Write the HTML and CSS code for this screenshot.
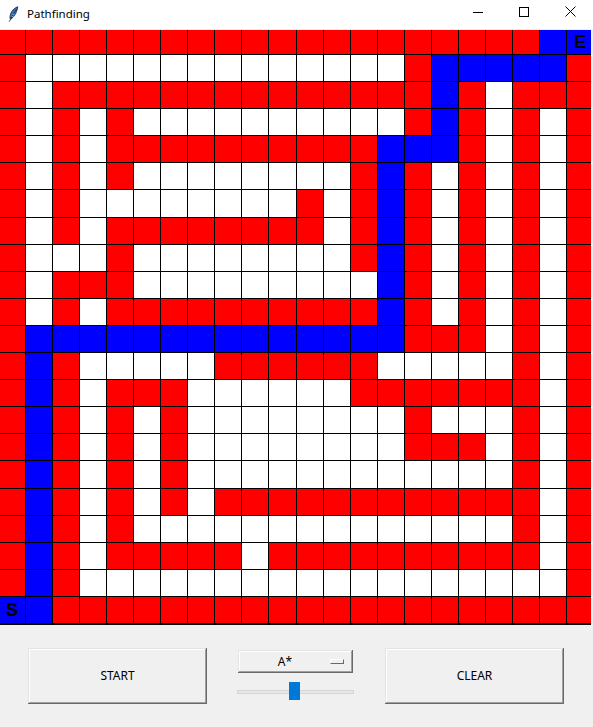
FILE: index.html
```html
<!DOCTYPE html>
<html>
<head>
<meta charset="utf-8">
<title>Pathfinding</title>
<link rel="stylesheet" href="styles.css">
</head>
<body>
<div class="window">
  <header class="titlebar">
    <svg class="app-icon" width="11" height="16" viewBox="0 0 11 16">
      <path d="M9.8 0.8 C6.5 1.8 3.2 5 2.2 9.5 C1.8 11.2 2 12.6 2.6 13.2 C5.6 11.5 8.6 7.5 9.8 0.8 Z" fill="#3a78c9" stroke="#1b2a44" stroke-width="0.9"/>
      <path d="M8.6 3 C6.4 6 4.3 9.6 2.6 13.2 L1.2 15.6" fill="none" stroke="#1b2a44" stroke-width="0.9"/>
      <path d="M4.2 8.6 L6.4 8.4 M3.6 10.6 L5.6 10.3" stroke="#a8c6ee" stroke-width="0.7"/>
    </svg>
    <span class="title">Pathfinding</span>
    <div class="win-controls">
      <span class="win-btn"><svg width="10" height="10" viewBox="0 0 10 10"><path d="M0 5.5 H10" stroke="#000" stroke-width="1"/></svg></span>
      <span class="win-btn"><svg width="10" height="10" viewBox="0 0 10 10"><rect x="0.5" y="0.5" width="9" height="9" fill="none" stroke="#000" stroke-width="1"/></svg></span>
      <span class="win-btn"><svg width="11" height="11" viewBox="0 0 11 11"><path d="M0.5 0.5 L10.5 10.5 M10.5 0.5 L0.5 10.5" stroke="#000" stroke-width="1"/></svg></span>
    </div>
  </header>

  <main class="canvas">
    <div class="board">
      <!-- row 0 -->
      <i class="r"></i><i class="r"></i><i class="r"></i><i class="r"></i><i class="r"></i><i class="r"></i><i class="r"></i><i class="r"></i><i class="r"></i><i class="r"></i><i class="r"></i><i class="r"></i><i class="r"></i><i class="r"></i><i class="r"></i><i class="r"></i><i class="r"></i><i class="r"></i><i class="r"></i><i class="r"></i><i class="b"></i><i class="b label">E</i>
      <!-- row 1 -->
      <i class="r"></i><i class="w"></i><i class="w"></i><i class="w"></i><i class="w"></i><i class="w"></i><i class="w"></i><i class="w"></i><i class="w"></i><i class="w"></i><i class="w"></i><i class="w"></i><i class="w"></i><i class="w"></i><i class="w"></i><i class="r"></i><i class="b"></i><i class="b"></i><i class="b"></i><i class="b"></i><i class="b"></i><i class="r"></i>
      <!-- row 2 -->
      <i class="r"></i><i class="w"></i><i class="r"></i><i class="r"></i><i class="r"></i><i class="r"></i><i class="r"></i><i class="r"></i><i class="r"></i><i class="r"></i><i class="r"></i><i class="r"></i><i class="r"></i><i class="r"></i><i class="r"></i><i class="r"></i><i class="b"></i><i class="r"></i><i class="w"></i><i class="r"></i><i class="r"></i><i class="r"></i>
      <!-- row 3 -->
      <i class="r"></i><i class="w"></i><i class="r"></i><i class="w"></i><i class="r"></i><i class="w"></i><i class="w"></i><i class="w"></i><i class="w"></i><i class="w"></i><i class="w"></i><i class="w"></i><i class="w"></i><i class="w"></i><i class="w"></i><i class="r"></i><i class="b"></i><i class="r"></i><i class="w"></i><i class="r"></i><i class="w"></i><i class="r"></i>
      <!-- row 4 -->
      <i class="r"></i><i class="w"></i><i class="r"></i><i class="w"></i><i class="r"></i><i class="r"></i><i class="r"></i><i class="r"></i><i class="r"></i><i class="r"></i><i class="r"></i><i class="r"></i><i class="r"></i><i class="r"></i><i class="b"></i><i class="b"></i><i class="b"></i><i class="r"></i><i class="w"></i><i class="r"></i><i class="w"></i><i class="r"></i>
      <!-- row 5 -->
      <i class="r"></i><i class="w"></i><i class="r"></i><i class="w"></i><i class="r"></i><i class="w"></i><i class="w"></i><i class="w"></i><i class="w"></i><i class="w"></i><i class="w"></i><i class="w"></i><i class="w"></i><i class="r"></i><i class="b"></i><i class="r"></i><i class="w"></i><i class="r"></i><i class="w"></i><i class="r"></i><i class="w"></i><i class="r"></i>
      <!-- row 6 -->
      <i class="r"></i><i class="w"></i><i class="r"></i><i class="w"></i><i class="w"></i><i class="w"></i><i class="w"></i><i class="w"></i><i class="w"></i><i class="w"></i><i class="w"></i><i class="r"></i><i class="w"></i><i class="r"></i><i class="b"></i><i class="r"></i><i class="w"></i><i class="r"></i><i class="w"></i><i class="r"></i><i class="w"></i><i class="r"></i>
      <!-- row 7 -->
      <i class="r"></i><i class="w"></i><i class="r"></i><i class="w"></i><i class="r"></i><i class="r"></i><i class="r"></i><i class="r"></i><i class="r"></i><i class="r"></i><i class="r"></i><i class="r"></i><i class="w"></i><i class="r"></i><i class="b"></i><i class="r"></i><i class="w"></i><i class="r"></i><i class="w"></i><i class="r"></i><i class="w"></i><i class="r"></i>
      <!-- row 8 -->
      <i class="r"></i><i class="w"></i><i class="w"></i><i class="w"></i><i class="r"></i><i class="w"></i><i class="w"></i><i class="w"></i><i class="w"></i><i class="w"></i><i class="w"></i><i class="w"></i><i class="w"></i><i class="r"></i><i class="b"></i><i class="r"></i><i class="w"></i><i class="r"></i><i class="w"></i><i class="r"></i><i class="w"></i><i class="r"></i>
      <!-- row 9 -->
      <i class="r"></i><i class="w"></i><i class="r"></i><i class="r"></i><i class="r"></i><i class="w"></i><i class="w"></i><i class="w"></i><i class="w"></i><i class="w"></i><i class="w"></i><i class="w"></i><i class="w"></i><i class="w"></i><i class="b"></i><i class="r"></i><i class="w"></i><i class="r"></i><i class="w"></i><i class="r"></i><i class="w"></i><i class="r"></i>
      <!-- row 10 -->
      <i class="r"></i><i class="w"></i><i class="r"></i><i class="w"></i><i class="r"></i><i class="r"></i><i class="r"></i><i class="r"></i><i class="r"></i><i class="r"></i><i class="r"></i><i class="r"></i><i class="r"></i><i class="r"></i><i class="b"></i><i class="r"></i><i class="w"></i><i class="r"></i><i class="w"></i><i class="r"></i><i class="w"></i><i class="r"></i>
      <!-- row 11 -->
      <i class="r"></i><i class="b"></i><i class="b"></i><i class="b"></i><i class="b"></i><i class="b"></i><i class="b"></i><i class="b"></i><i class="b"></i><i class="b"></i><i class="b"></i><i class="b"></i><i class="b"></i><i class="b"></i><i class="b"></i><i class="r"></i><i class="r"></i><i class="r"></i><i class="w"></i><i class="r"></i><i class="w"></i><i class="r"></i>
      <!-- row 12 -->
      <i class="r"></i><i class="b"></i><i class="r"></i><i class="w"></i><i class="w"></i><i class="w"></i><i class="w"></i><i class="w"></i><i class="r"></i><i class="r"></i><i class="r"></i><i class="r"></i><i class="r"></i><i class="r"></i><i class="w"></i><i class="w"></i><i class="w"></i><i class="w"></i><i class="w"></i><i class="r"></i><i class="w"></i><i class="r"></i>
      <!-- row 13 -->
      <i class="r"></i><i class="b"></i><i class="r"></i><i class="w"></i><i class="r"></i><i class="r"></i><i class="r"></i><i class="w"></i><i class="w"></i><i class="w"></i><i class="w"></i><i class="w"></i><i class="w"></i><i class="r"></i><i class="r"></i><i class="r"></i><i class="r"></i><i class="r"></i><i class="r"></i><i class="r"></i><i class="w"></i><i class="r"></i>
      <!-- row 14 -->
      <i class="r"></i><i class="b"></i><i class="r"></i><i class="w"></i><i class="r"></i><i class="w"></i><i class="r"></i><i class="w"></i><i class="w"></i><i class="w"></i><i class="w"></i><i class="w"></i><i class="w"></i><i class="w"></i><i class="w"></i><i class="r"></i><i class="w"></i><i class="w"></i><i class="w"></i><i class="r"></i><i class="w"></i><i class="r"></i>
      <!-- row 15 -->
      <i class="r"></i><i class="b"></i><i class="r"></i><i class="w"></i><i class="r"></i><i class="w"></i><i class="r"></i><i class="w"></i><i class="w"></i><i class="w"></i><i class="w"></i><i class="w"></i><i class="w"></i><i class="w"></i><i class="w"></i><i class="r"></i><i class="r"></i><i class="r"></i><i class="w"></i><i class="r"></i><i class="w"></i><i class="r"></i>
      <!-- row 16 -->
      <i class="r"></i><i class="b"></i><i class="r"></i><i class="w"></i><i class="r"></i><i class="w"></i><i class="r"></i><i class="w"></i><i class="w"></i><i class="w"></i><i class="w"></i><i class="w"></i><i class="w"></i><i class="w"></i><i class="w"></i><i class="w"></i><i class="w"></i><i class="w"></i><i class="w"></i><i class="r"></i><i class="w"></i><i class="r"></i>
      <!-- row 17 -->
      <i class="r"></i><i class="b"></i><i class="r"></i><i class="w"></i><i class="r"></i><i class="w"></i><i class="r"></i><i class="w"></i><i class="r"></i><i class="r"></i><i class="r"></i><i class="r"></i><i class="r"></i><i class="r"></i><i class="r"></i><i class="r"></i><i class="r"></i><i class="r"></i><i class="r"></i><i class="r"></i><i class="w"></i><i class="r"></i>
      <!-- row 18 -->
      <i class="r"></i><i class="b"></i><i class="r"></i><i class="w"></i><i class="r"></i><i class="w"></i><i class="w"></i><i class="w"></i><i class="w"></i><i class="w"></i><i class="w"></i><i class="w"></i><i class="w"></i><i class="w"></i><i class="w"></i><i class="w"></i><i class="w"></i><i class="w"></i><i class="w"></i><i class="r"></i><i class="w"></i><i class="r"></i>
      <!-- row 19 -->
      <i class="r"></i><i class="b"></i><i class="r"></i><i class="w"></i><i class="r"></i><i class="r"></i><i class="r"></i><i class="r"></i><i class="r"></i><i class="w"></i><i class="r"></i><i class="r"></i><i class="r"></i><i class="r"></i><i class="r"></i><i class="r"></i><i class="r"></i><i class="r"></i><i class="r"></i><i class="r"></i><i class="w"></i><i class="r"></i>
      <!-- row 20 -->
      <i class="r"></i><i class="b"></i><i class="r"></i><i class="w"></i><i class="w"></i><i class="w"></i><i class="w"></i><i class="w"></i><i class="w"></i><i class="w"></i><i class="w"></i><i class="w"></i><i class="w"></i><i class="w"></i><i class="w"></i><i class="w"></i><i class="w"></i><i class="w"></i><i class="w"></i><i class="w"></i><i class="w"></i><i class="r"></i>
      <!-- row 21 -->
      <i class="b label">S</i><i class="b"></i><i class="r"></i><i class="r"></i><i class="r"></i><i class="r"></i><i class="r"></i><i class="r"></i><i class="r"></i><i class="r"></i><i class="r"></i><i class="r"></i><i class="r"></i><i class="r"></i><i class="r"></i><i class="r"></i><i class="r"></i><i class="r"></i><i class="r"></i><i class="r"></i><i class="r"></i><i class="r"></i>
    </div>
  </main>

  <footer class="controls">
    <button class="btn">START</button>
    <div class="middle">
      <div class="option-menu">
        <span class="option-text">A*</span>
        <span class="option-indicator"></span>
      </div>
      <div class="slider">
        <div class="slider-track"></div>
        <div class="slider-thumb"></div>
      </div>
    </div>
    <button class="btn">CLEAR</button>
  </footer>
</div>
</body>
</html>
```

FILE: styles.css
```css
html, body {
  margin: 0;
  padding: 0;
}

body {
  width: 593px;
  height: 727px;
  overflow: hidden;
  background: #f0f0f0;
  font-family: "Noto Sans", "Open Sans", sans-serif;
  color: #000;
}

.window {
  display: flex;
  flex-direction: column;
  width: 593px;
  height: 727px;
}

/* Title bar */
.titlebar {
  height: 29px;
  flex: none;
  background: #fff;
  border-bottom: 1px solid #f0f0f0;
  display: flex;
  align-items: center;
}

.app-icon {
  margin-left: 8px;
  margin-top: -1px;
}

.title {
  margin-left: 8px;
  font-size: 11.5px;
  color: #000;
  margin-top: -2px;
}

.win-controls {
  margin-left: auto;
  display: flex;
  height: 100%;
}

.win-btn {
  width: 46px;
  height: 100%;
  display: flex;
  align-items: center;
  justify-content: center;
  margin-top: -3px;
}

/* Board */
.canvas {
  width: 591px;
  flex: none;
  overflow: hidden;
}

.board {
  display: grid;
  grid-template-columns: repeat(22, 26.05px);
  grid-template-rows: 24px repeat(21, 26.1px);
  gap: 1px;
  background: #000;
  margin-left: -1px;
  width: max-content;
  border-bottom: 2px solid #000;
}

.board i {
  display: block;
}

.r { background: #ff0000; }
.w { background: #ffffff; }
.b { background: #0000ff; }

.label {
  display: flex !important;
  align-items: center;
  justify-content: center;
  font-style: normal;
  font-family: "Liberation Sans", Arial, sans-serif;
  font-weight: bold;
  font-size: 18px;
  line-height: 1;
  color: #000;
}

/* Controls */
.controls {
  flex: 1;
  display: flex;
  align-items: flex-start;
  gap: 31px;
  padding: 23px 0 0 28px;
}

.btn {
  width: 179px;
  height: 56px;
  box-sizing: border-box;
  border: none;
  background: #f0f0f0;
  font-family: "Noto Sans", "Open Sans", sans-serif;
  font-size: 12px;
  color: #000;
  padding: 0;
  box-shadow:
    inset -1px -1px 0 #696969,
    inset 1px 1px 0 #e3e3e3,
    inset -2px -2px 0 #a0a0a0,
    inset 2px 2px 0 #ffffff;
}

.middle {
  width: 116px;
  display: flex;
  flex-direction: column;
  padding-top: 2px;
}

.option-menu {
  width: 115px;
  height: 23px;
  box-sizing: border-box;
  display: flex;
  align-items: center;
  padding-right: 9px;
  font-size: 12px;
  box-shadow:
    inset -1px -1px 0 #696969,
    inset 1px 1px 0 #e3e3e3,
    inset -2px -2px 0 #a0a0a0,
    inset 2px 2px 0 #ffffff;
}

.option-text {
  flex: 1;
  text-align: center;
  padding-left: 2px;
}

.option-indicator {
  width: 14px;
  height: 5px;
  box-sizing: border-box;
  border-top: 1px solid #ffffff;
  border-left: 1px solid #ffffff;
  border-right: 1px solid #696969;
  border-bottom: 1px solid #696969;
  background: #f0f0f0;
}

.slider {
  position: relative;
  height: 18px;
  margin-top: 9px;
  margin-left: -1px;
  width: 117px;
}

.slider-track {
  position: absolute;
  left: 0;
  right: 0;
  top: 8px;
  height: 2px;
  background: #e7e7e7;
  border: 1px solid #d6d6d6;
}

.slider-thumb {
  position: absolute;
  left: 52px;
  top: 0;
  width: 11px;
  height: 18px;
  background: #0078d7;
}
```
